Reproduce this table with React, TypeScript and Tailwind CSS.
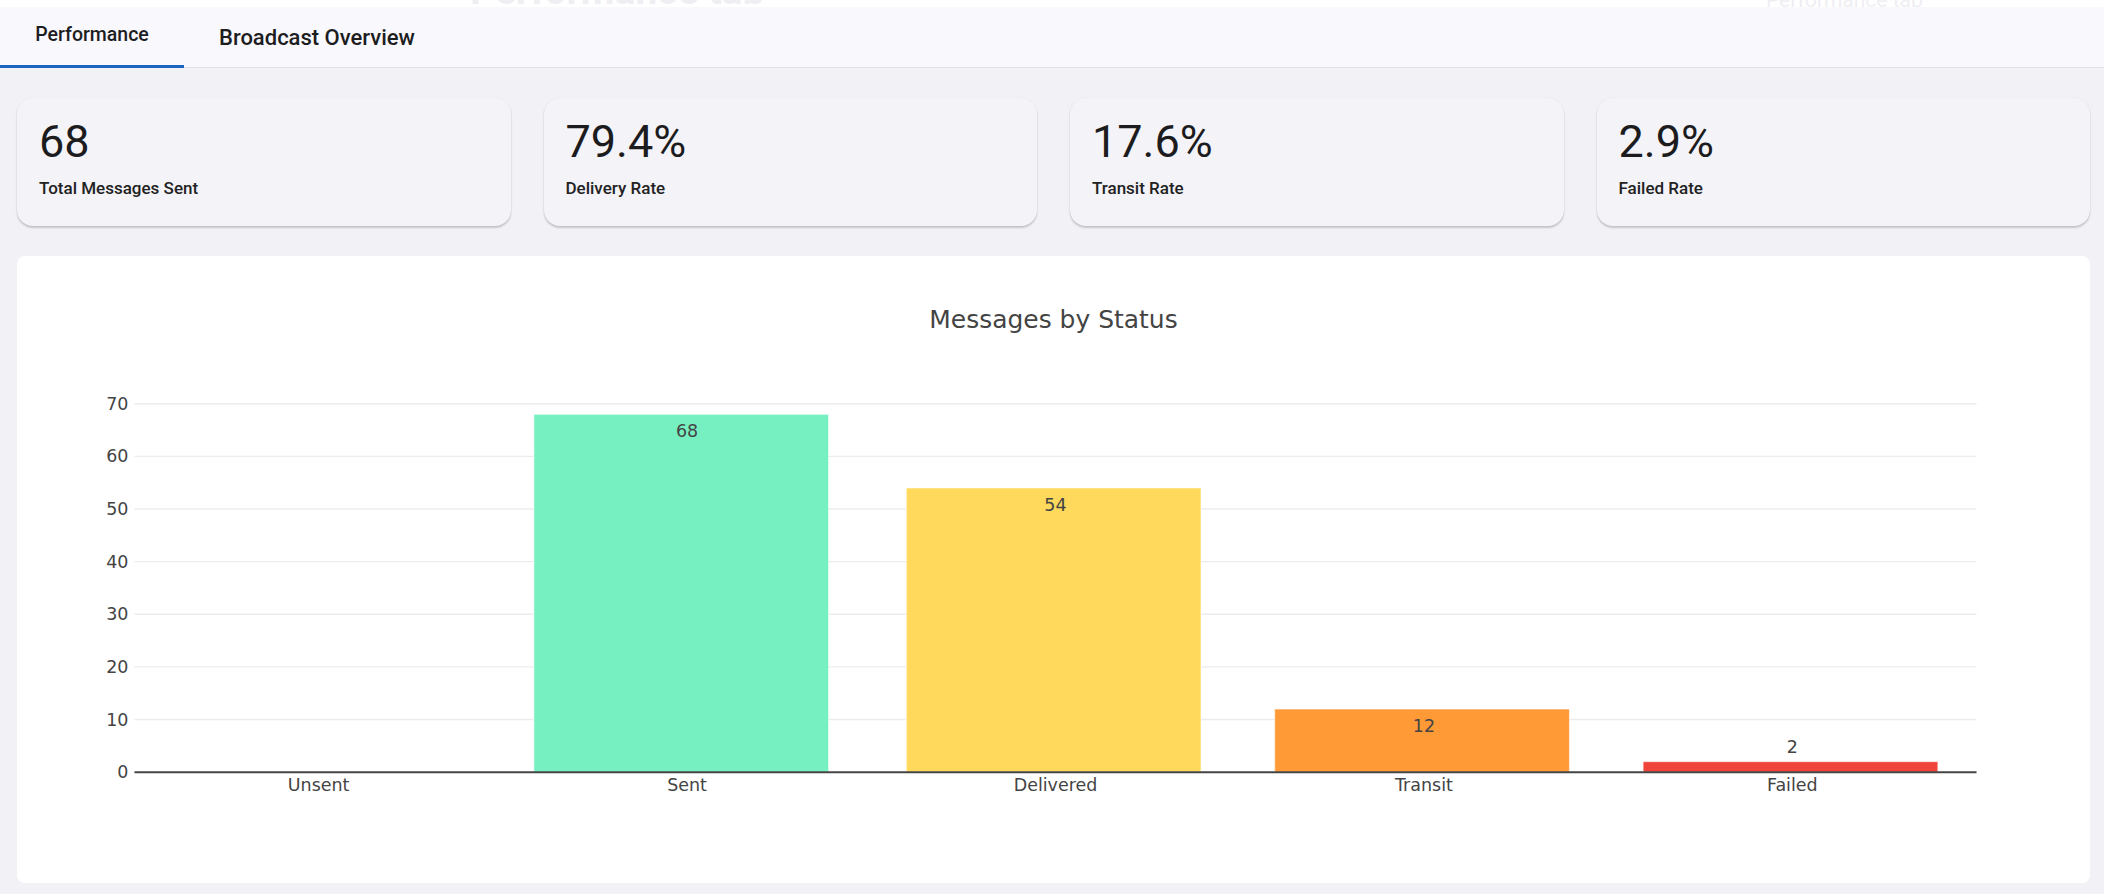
import React from "react";

const cards = [
  { value: "68", label: "Total Messages Sent" },
  { value: "79.4%", label: "Delivery Rate" },
  { value: "17.6%", label: "Transit Rate" },
  { value: "2.9%", label: "Failed Rate" },
];

const bars = [
  { name: "Unsent", value: 0, color: "#76f0c0" },
  { name: "Sent", value: 68, color: "#76f0c0" },
  { name: "Delivered", value: 54, color: "#ffd95c" },
  { name: "Transit", value: 12, color: "#ff9a36" },
  { name: "Failed", value: 2, color: "#f0443a" },
];

function Chart() {
  const x0 = 116;
  const x1 = 1961;
  const y0 = 517;
  const unit = (517 - 148) / 70;
  const cat = (x1 - x0) / 5;
  const bw = cat * 0.8;
  const font = "'DejaVu Sans', Verdana, sans-serif";
  const fs = 17.5;
  return (
    <svg viewBox="0 0 2073 628" className="w-full h-full block">
      <text x={1036.5} y={72} textAnchor="middle" fontFamily={font} fontSize={25} fill="#444">
        Messages by Status
      </text>
      {[10, 20, 30, 40, 50, 60, 70].map((t) => (
        <line key={t} x1={x0} x2={x1} y1={y0 - t * unit} y2={y0 - t * unit} stroke="#ececec" strokeWidth={1.4} />
      ))}
      {[0, 10, 20, 30, 40, 50, 60, 70].map((t) => (
        <text key={t} x={110} y={y0 - t * unit + 6} textAnchor="end" fontFamily={font} fontSize={fs} fill="#444">
          {t}
        </text>
      ))}
      {bars.map((b, i) => {
        const left = x0 + cat * i + cat * 0.095 - (i === 1 ? 4 : 0);
        const h = b.value * unit;
        const cx = x0 + cat * i + cat / 2;
        return (
          <g key={b.name}>
            {b.value > 0 && (
              <rect x={left} y={y0 - h} width={bw} height={h} fill={b.color} stroke="rgba(255,255,255,0.6)" strokeWidth={1} />
            )}
            {b.value > 5 && (
              <text x={cx} y={y0 - h + 23} textAnchor="middle" fontFamily={font} fontSize={fs} fill="#444">
                {b.value}
              </text>
            )}
            {b.value > 0 && b.value <= 5 && (
              <text x={cx} y={y0 - h - 9} textAnchor="middle" fontFamily={font} fontSize={fs} fill="#444">
                {b.value}
              </text>
            )}
            <text x={cx} y={536} textAnchor="middle" fontFamily={font} fontSize={fs} fill="#444">
              {b.name}
            </text>
          </g>
        );
      })}
      <line x1={x0} x2={x1} y1={y0} y2={y0} stroke="#444" strokeWidth={2} />
    </svg>
  );
}

export default function App() {
  return (
    <div className="w-[2104px] h-[894px] bg-white overflow-hidden flex flex-col" style={{ fontFamily: "Roboto, 'Liberation Sans', sans-serif" }}>
      <div className="relative h-[7px] bg-white overflow-hidden shrink-0">
        <span className="absolute left-[470px] top-[-28px] text-[39px] font-bold text-[#efeef2] leading-none whitespace-nowrap">Performance tab</span>
        <span className="absolute left-[1766px] top-[-10px] text-[21px] text-[#efeef2] leading-none whitespace-nowrap">Performance tab</span>
      </div>
      <div className="h-[61px] bg-[#f9f8fc] border-b border-[#e2e1e6] flex items-stretch shrink-0">
        <div className="w-[184px] flex items-center justify-center border-b-[3px] border-[#1c64c2] mb-[-1px]">
          <span className="text-[19.5px] font-medium text-[#1d1d1f] mt-[-3px]">Performance</span>
        </div>
        <div className="flex items-center pl-[35px]">
          <span className="text-[22px] font-medium text-[#1d1d1f]">Broadcast Overview</span>
        </div>
      </div>
      <div className="flex-1 bg-[#f2f1f6] pl-[17px] pr-[14px] pt-[30px] pb-[11px] flex flex-col gap-[30px] min-h-0">
        <div className="grid grid-cols-4 gap-[33px] shrink-0">
          {cards.map((c) => (
            <div key={c.label} className="h-[128px] bg-[#f4f3f8] rounded-[16px] shadow-[0_2px_2px_rgba(0,0,0,0.18),0_0_2px_rgba(0,0,0,0.06)] px-[22px] pt-[17px] flex flex-col">
              <div className="text-[45px] leading-[54px] text-[#1c1c1e]">{c.value}</div>
              <div className="text-[17px] font-medium text-[#222] mt-[7px]">{c.label}</div>
            </div>
          ))}
        </div>
        <div className="flex-1 bg-white rounded-[8px] min-h-0">
          <Chart />
        </div>
      </div>
    </div>
  );
}
